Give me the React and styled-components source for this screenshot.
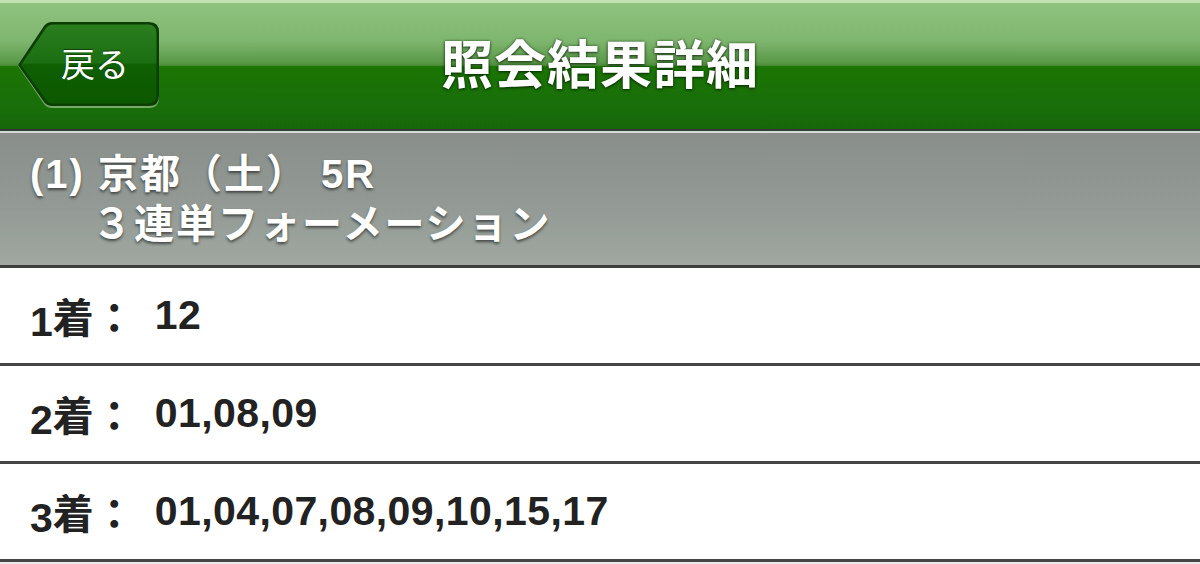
import React from "react";
import styled, { createGlobalStyle } from "styled-components";

const FONT = `"Liberation Sans", "Noto Sans CJK JP", sans-serif`;

const GlobalStyle = createGlobalStyle`
  html, body {
    margin: 0;
    padding: 0;
    background: #ebebeb;
  }
  body {
    font-family: ${FONT};
  }
`;

const Page = styled.div`
  width: 1200px;
  height: 564px;
  overflow: hidden;
  display: flex;
  flex-direction: column;
  background: #ebebeb;
`;

const NavBar = styled.header`
  height: 126px;
  border-top: 3px solid #c3e3b5;
  border-bottom: 2px solid #343a34;
  background: linear-gradient(
    to bottom,
    #8ec37f 0%,
    #7fb66f 30%,
    #5a9a48 47%,
    #4c8c3a 49.5%,
    #1b7502 50.5%,
    #197009 75%,
    #17670a 100%
  );
  display: grid;
  grid-template-columns: 1fr auto 1fr;
  align-items: center;
  padding: 0 15px;
`;

const BackButton = styled.button`
  justify-self: start;
  display: grid;
  width: 146px;
  height: 88px;
  padding: 0;
  margin: 0 0 2px 0;
  border: none;
  background: none;
  cursor: pointer;

  & > * {
    grid-area: 1 / 1;
  }
`;

const BackShape = styled.svg`
  width: 146px;
  height: 88px;
  display: block;
`;

const BackLabel = styled.span`
  align-self: center;
  justify-self: center;
  margin-left: 14px;
  font-family: ${FONT};
  font-size: 34px;
  color: #ffffff;
  text-shadow: 0 -1px 1px rgba(0, 0, 0, 0.45);
  line-height: 1;
`;

const Title = styled.h1`
  margin: 0;
  font-family: ${FONT};
  font-weight: 700;
  font-size: 52px;
  letter-spacing: 1px;
  color: #ffffff;
  text-shadow: 0 1px 3px rgba(0, 0, 0, 0.6), 0 0 3px rgba(0, 40, 0, 0.5);
  line-height: 1;
`;

const RaceHeader = styled.section`
  height: 132px;
  border-top: 2px solid #d3dbdb;
  border-bottom: 3px solid #3d403d;
  background: linear-gradient(to bottom, #898e8a 0%, #939a95 55%, #a0a8a1 100%);
  box-sizing: content-box;
  padding: 0 0 0 30px;
  display: flex;
  flex-direction: column;
  justify-content: center;
  gap: 2px;
  color: #ffffff;
  font-family: ${FONT};
  font-weight: 700;
  font-size: 40px;
  line-height: 48px;
  letter-spacing: 2px;
  text-shadow: 0 2px 3px rgba(0, 0, 0, 0.55);
`;

const HeaderLine = styled.div`
  white-space: pre;
  padding-left: ${(p) => p.$indent || 0}px;
`;

const Row = styled.div`
  height: 95px;
  border-bottom: 3px solid #454545;
  background: #ffffff;
  display: flex;
  align-items: center;
  padding: 0 0 0 30px;
  font-family: ${FONT};
  font-weight: 700;
  font-size: 41px;
  color: #222222;
`;

const RowLabel = styled.span`
  white-space: pre;
`;

const Kanji = styled.span`
  vertical-align: 3px;
`;

const RowValue = styled.span`
  margin-left: 20px;
  letter-spacing: 0.4px;
`;

function BackShapeArt() {
  return (
    <BackShape viewBox="0 0 146 88">
      <defs>
        <linearGradient id="backFill" x1="0" y1="0" x2="0" y2="1">
          <stop offset="0" stopColor="#2b7e1e" />
          <stop offset="0.49" stopColor="#1c6f12" />
          <stop offset="0.5" stopColor="#0f5f03" />
          <stop offset="1" stopColor="#0c5800" />
        </linearGradient>
      </defs>
      <path
        d="M3 45 L29 6 Q32 2 37 2 L134 2 Q144 2 144 12 L144 76 Q144 87 134 87 L37 87 Q32 87 29 83 Z"
        fill="#76aa68"
      />
      <path
        d="M3 44 L29 5 Q32 1 37 1 L134 1 Q144 1 144 11 L144 75 Q144 85 134 85 L37 85 Q32 85 29 81 Z"
        fill="#0b3d05"
      />
      <path
        d="M6 44 L31 7 Q33.5 3.5 38 3.5 L133 3.5 Q141.5 3.5 141.5 12 L141.5 74 Q141.5 82.5 133 82.5 L38 82.5 Q33.5 82.5 31 79 Z"
        fill="url(#backFill)"
      />
    </BackShape>
  );
}

const rows = [
  { place: "1", value: "12" },
  { place: "2", value: "01,08,09" },
  { place: "3", value: "01,04,07,08,09,10,15,17" },
];

export default function App() {
  return (
    <>
      <GlobalStyle />
      <Page>
        <NavBar>
          <BackButton type="button">
            <BackShapeArt />
            <BackLabel>戻る</BackLabel>
          </BackButton>
          <Title>照会結果詳細</Title>
          <span />
        </NavBar>
        <RaceHeader>
          <HeaderLine>{"(1) 京都（土） 5R"}</HeaderLine>
          <HeaderLine $indent={62}>３連単フォーメーション</HeaderLine>
        </RaceHeader>
        {rows.map((r) => (
          <Row key={r.place}>
            <RowLabel>
              {r.place}
              <Kanji>着：</Kanji>
            </RowLabel>
            <RowValue>{r.value}</RowValue>
          </Row>
        ))}
      </Page>
    </>
  );
}
